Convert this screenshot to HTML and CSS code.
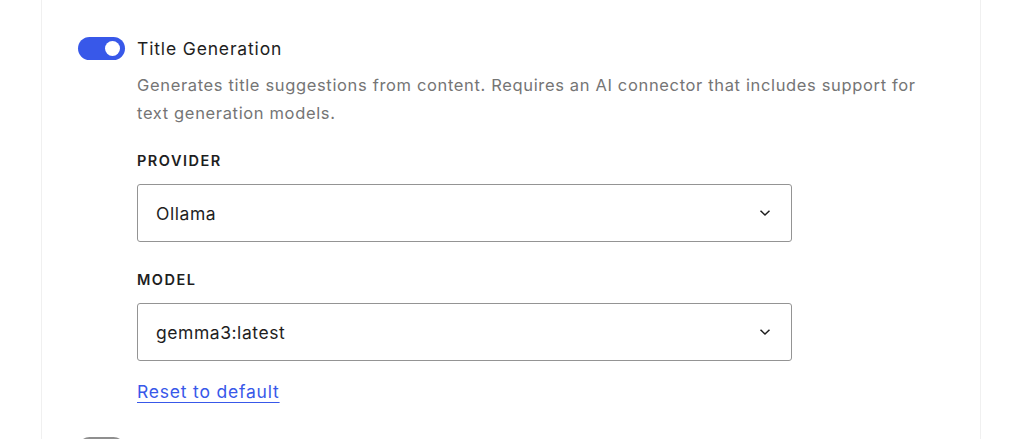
FILE: index.html
```html
<!DOCTYPE html>
<html lang="en">
<head>
  <meta charset="UTF-8" />
  <meta name="viewport" content="width=device-width, initial-scale=1.0"/>
  <title>AI Features - Settings</title>
  <link rel="stylesheet" href="styles.css">
</head>
<body>
  <div class="panel">
    <div class="feature">
      <div class="feature-head">
        <span class="toggle on"><span class="knob"></span></span>
        <span class="feature-title">Title Generation</span>
      </div>
      <div class="feature-body">
        <p class="help">Generates title suggestions from content. Requires an AI connector that includes support for text generation models.</p>

        <div class="field">
          <label class="field-label">Provider</label>
          <div class="select">
            <span>Ollama</span>
            <svg class="chevron" width="12" height="8" viewBox="0 0 12 8"><path d="M1.5 1.8 6 6 10.5 1.8" fill="none" stroke="#1e1e1e" stroke-width="1.5"/></svg>
          </div>
        </div>

        <div class="field">
          <label class="field-label">Model</label>
          <div class="select">
            <span>gemma3:latest</span>
            <svg class="chevron" width="12" height="8" viewBox="0 0 12 8"><path d="M1.5 1.8 6 6 10.5 1.8" fill="none" stroke="#1e1e1e" stroke-width="1.5"/></svg>
          </div>
        </div>

        <a class="reset" href="#">Reset to default</a>
      </div>
    </div>

    <div class="feature">
      <div class="feature-head">
        <span class="toggle"><span class="knob"></span></span>
      </div>
    </div>
  </div>
</body>
</html>
```

FILE: styles.css
```css
* {
  margin: 0;
  padding: 0;
  box-sizing: border-box;
  font-family: Inter, 'Noto Sans', sans-serif;
}
body {
  background: #fff;
  color: #1e1e1e;
  overflow: hidden;
  height: 439px;
}
.panel {
  margin: 0 43px 0 41px;
  border-left: 1px solid #f0f0f0;
  border-right: 1px solid #f0f0f0;
  height: 439px;
  padding: 36px 0 0 36px;
  overflow: hidden;
}
.feature {
  margin-bottom: 34px;
}
.feature-head {
  display: flex;
  align-items: center;
  gap: 12px;
  height: 24px;
}
.toggle {
  position: relative;
  width: 47px;
  height: 23px;
  border-radius: 12px;
  background: #8f8f8f;
  flex-shrink: 0;
}
.toggle .knob {
  position: absolute;
  top: 4px;
  left: 4px;
  width: 15px;
  height: 15px;
  border-radius: 50%;
  background: #fff;
}
.toggle.on {
  background: #3858e9;
}
.toggle.on .knob {
  left: auto;
  right: 5px;
}
.feature-title {
  font-size: 17.5px;
  letter-spacing: 0.85px;
  color: #1e1e1e;
}
.feature-body {
  padding-left: 59px;
  padding-top: 11px;
}
.help {
  font-size: 16.5px;
  letter-spacing: 0.65px;
  line-height: 28px;
  color: #757575;
  max-width: 800px;
}
.field {
  margin-top: 25px;
}
.field-label {
  display: block;
  font-size: 14.5px;
  font-weight: 600;
  text-transform: uppercase;
  letter-spacing: 1.5px;
  line-height: 18px;
  margin-bottom: 14px;
}
.select {
  display: flex;
  align-items: center;
  justify-content: space-between;
  width: 655px;
  height: 58px;
  border: 1px solid #949494;
  border-radius: 3px;
  padding: 0 20px 0 18px;
  font-size: 17.5px;
  letter-spacing: 0.55px;
}
.field + .field {
  margin-top: 29px;
}
.reset {
  display: inline-block;
  margin-top: 20px;
  font-size: 17.5px;
  letter-spacing: 0.8px;
  color: #3858e9;
  text-decoration: underline;
  text-underline-offset: 4px;
  text-decoration-thickness: 1px;
}
```
